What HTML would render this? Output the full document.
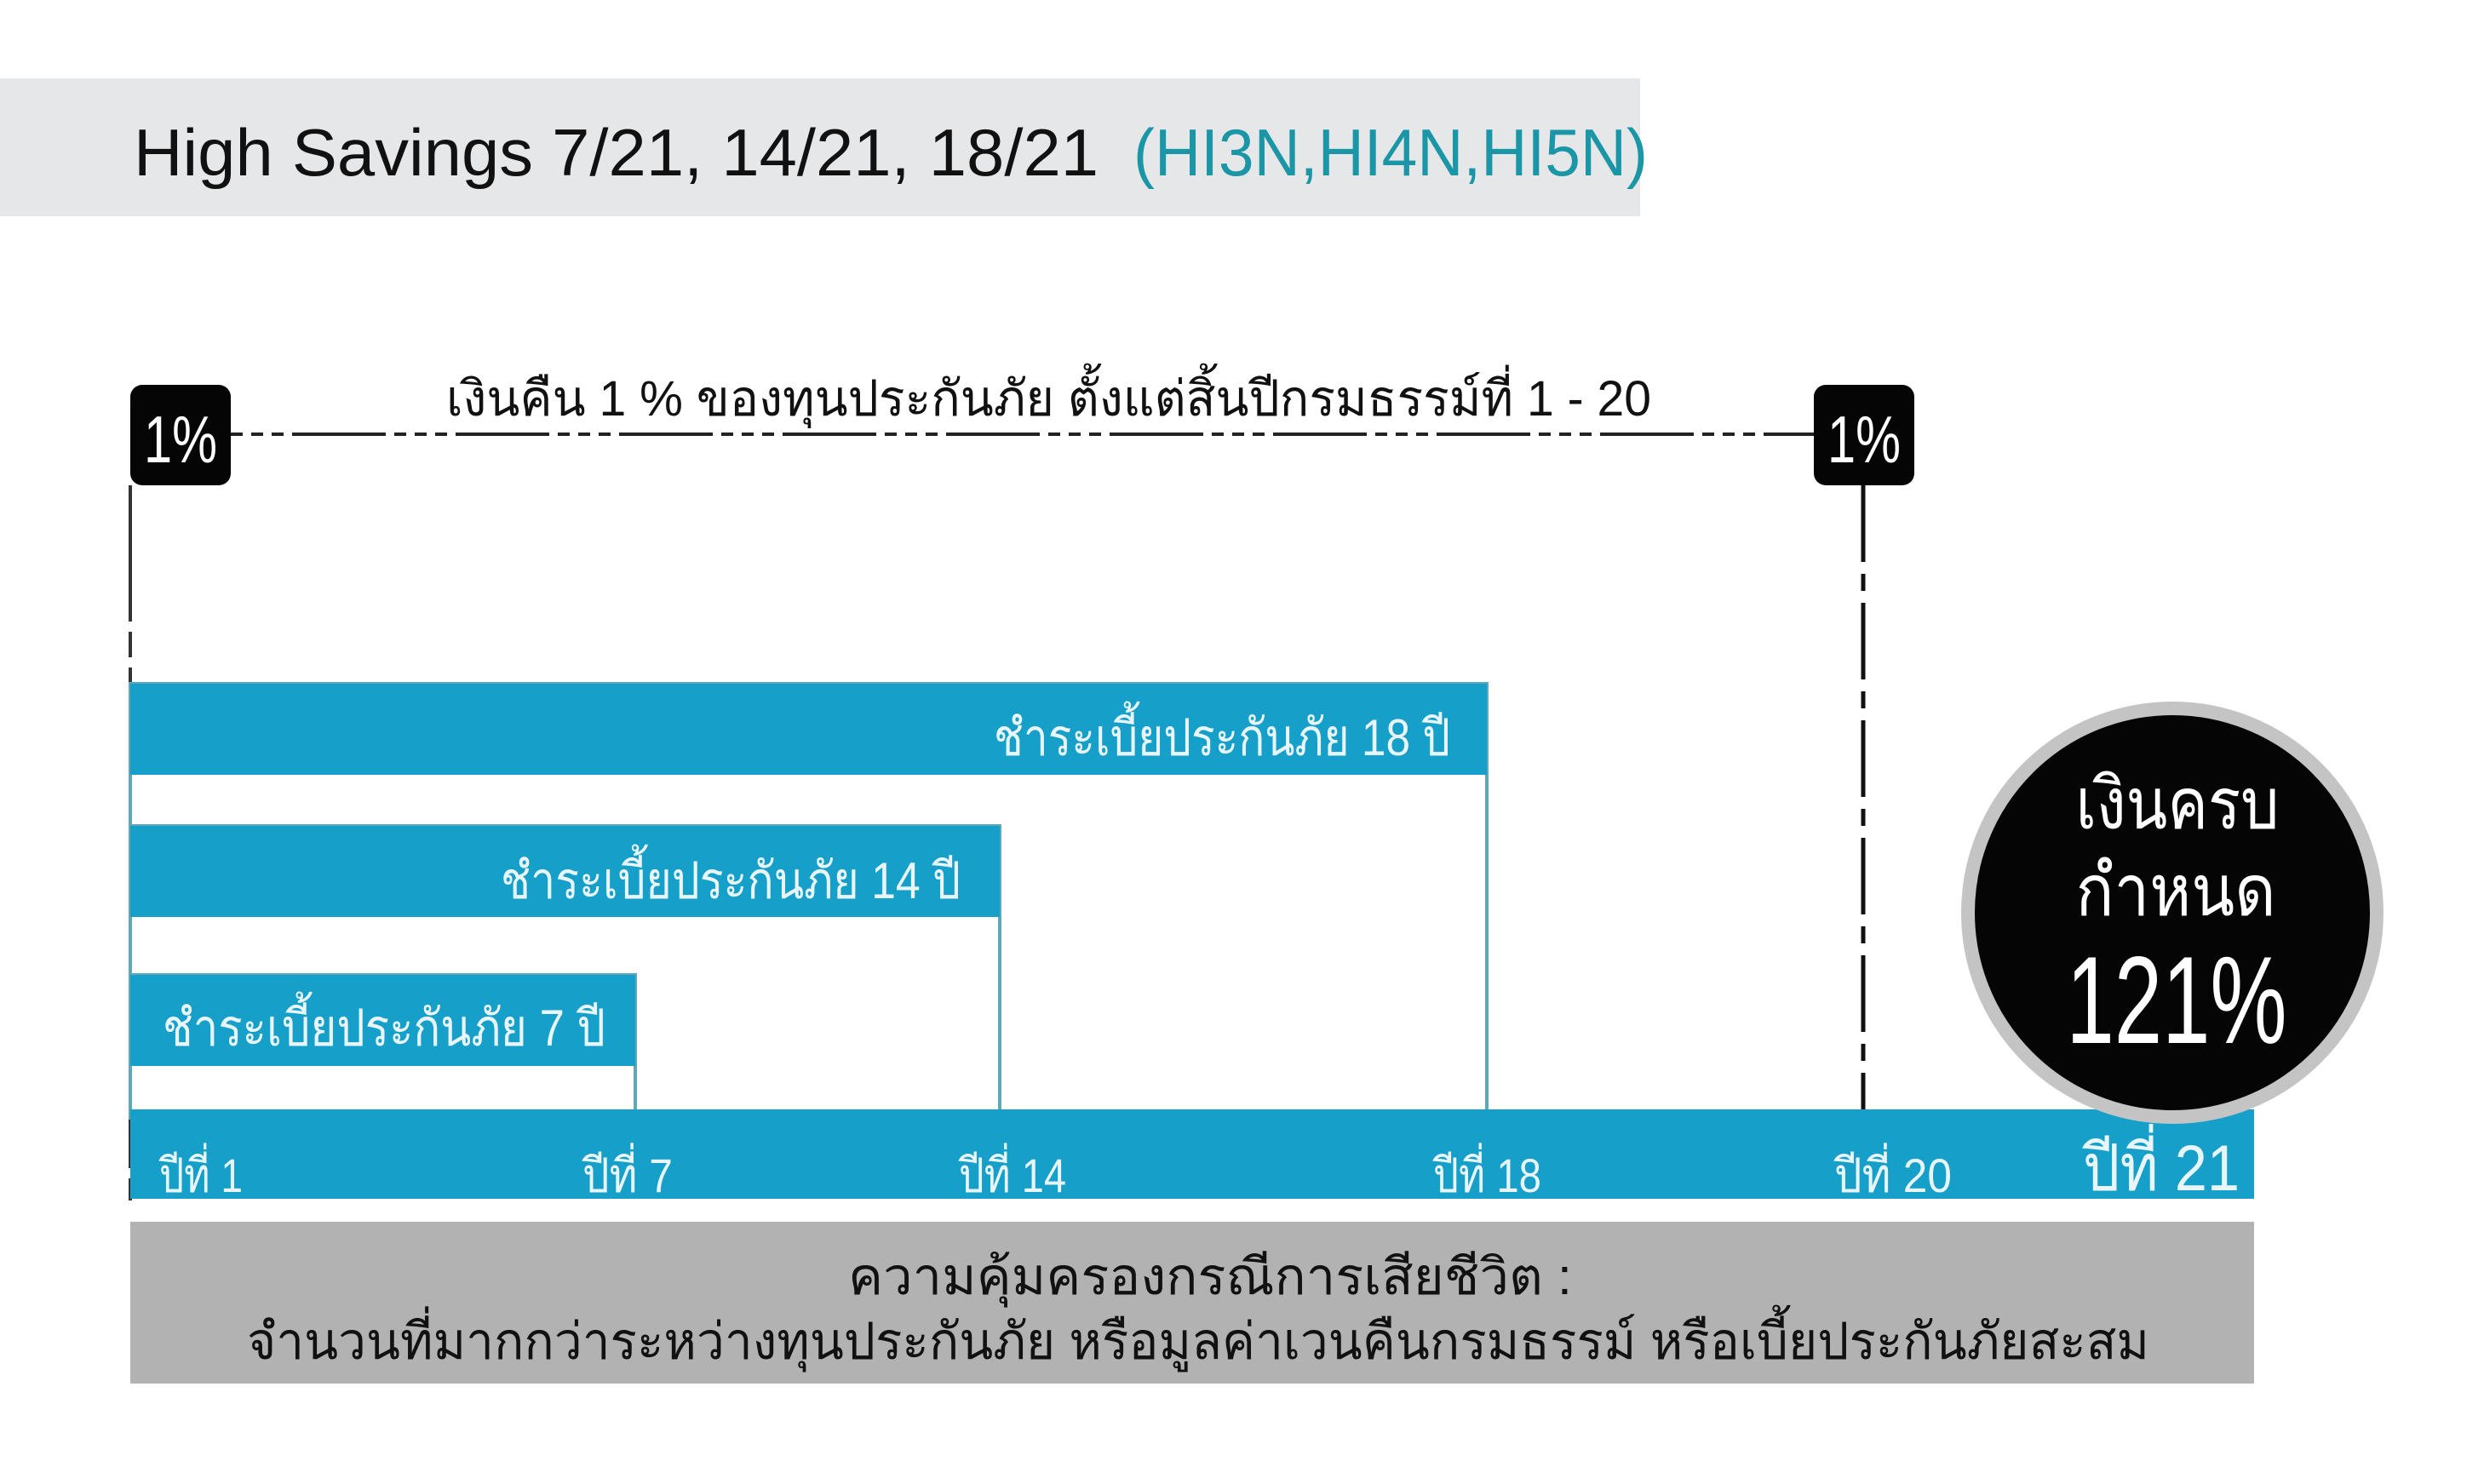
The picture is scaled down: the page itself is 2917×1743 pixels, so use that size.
<!DOCTYPE html>
<html><head><meta charset="utf-8"><style>
html,body{margin:0;padding:0;background:#fff;width:2917px;height:1743px;overflow:hidden}
svg{display:block}
text{font-family:"Liberation Sans","DejaVu Sans",sans-serif}
</style></head><body>
<svg width="2917" height="1743" viewBox="0 0 2917 1743" xmlns="http://www.w3.org/2000/svg">
<rect x="0" y="92" width="1926" height="162" fill="#e6e7e8"/>
<text x="157" y="206" font-size="78" fill="#111" textLength="1133" lengthAdjust="spacingAndGlyphs">High Savings 7/21, 14/21, 18/21</text>
<text x="1331" y="206" font-size="78" fill="#1a96a6" textLength="604" lengthAdjust="spacingAndGlyphs">(HI3N,HI4N,HI5N)</text>

<text x="524" y="488" font-size="58" fill="#111" textLength="1415" lengthAdjust="spacingAndGlyphs">เงินคืน 1 % ของทุนประกันภัย ตั้งแต่สิ้นปีกรมธรรม์ที่  1 - 20</text>
<line x1="271" y1="510" x2="2134" y2="510" stroke="#222" stroke-width="4" stroke-dasharray="14 10 14 10 14 10 110 10"/>
<line x1="153" y1="570" x2="153" y2="1410" stroke="#333" stroke-width="4" stroke-dasharray="160 12 30 12"/>
<line x1="2188" y1="570" x2="2188" y2="1305" stroke="#111" stroke-width="5" stroke-dasharray="90 14 20 14"/>

<rect x="153" y="452" width="118" height="118" rx="14" fill="#050505"/>
<text x="212" y="543" font-size="78" fill="#fff" text-anchor="middle" textLength="86" lengthAdjust="spacingAndGlyphs">1%</text>
<rect x="2130" y="452" width="118" height="118" rx="14" fill="#050505"/>
<text x="2189" y="543" font-size="78" fill="#fff" text-anchor="middle" textLength="86" lengthAdjust="spacingAndGlyphs">1%</text>

<!-- boxes -->
<rect x="153" y="803" width="1593" height="510" fill="#fff" stroke="#62a6ba" stroke-width="4"/>
<rect x="153" y="803" width="1593" height="107" fill="#159fc9"/>
<text x="1703" y="887" font-size="60" fill="#e8f6fb" text-anchor="end" textLength="536" lengthAdjust="spacingAndGlyphs">ชำระเบี้ยประกันภัย 18 ปี</text>

<rect x="153" y="970" width="1021" height="343" fill="#fff" stroke="#62a6ba" stroke-width="4"/>
<rect x="153" y="970" width="1021" height="107" fill="#159fc9"/>
<text x="1128" y="1055" font-size="60" fill="#e8f6fb" text-anchor="end" textLength="540" lengthAdjust="spacingAndGlyphs">ชำระเบี้ยประกันภัย 14 ปี</text>

<rect x="153" y="1145" width="593" height="168" fill="#fff" stroke="#62a6ba" stroke-width="4"/>
<rect x="153" y="1145" width="593" height="107" fill="#159fc9"/>
<text x="191" y="1228" font-size="60" fill="#e8f6fb" textLength="520" lengthAdjust="spacingAndGlyphs">ชำระเบี้ยประกันภัย 7 ปี</text>

<rect x="153" y="1303" width="2494" height="105" fill="#159fc9"/>
<text x="187" y="1400" font-size="56" fill="#e8f6fb" textLength="98" lengthAdjust="spacingAndGlyphs">ปีที่ 1</text>
<text x="684" y="1400" font-size="56" fill="#e8f6fb" textLength="106" lengthAdjust="spacingAndGlyphs">ปีที่ 7</text>
<text x="1126" y="1400" font-size="56" fill="#e8f6fb" textLength="126" lengthAdjust="spacingAndGlyphs">ปีที่ 14</text>
<text x="1683" y="1400" font-size="56" fill="#e8f6fb" textLength="127" lengthAdjust="spacingAndGlyphs">ปีที่ 18</text>
<text x="2154" y="1400" font-size="56" fill="#e8f6fb" textLength="138" lengthAdjust="spacingAndGlyphs">ปีที่ 20</text>
<text x="2446" y="1398" font-size="76" fill="#e8f6fb" textLength="184" lengthAdjust="spacingAndGlyphs">ปีที่ 21</text>

<rect x="153" y="1435" width="2494" height="190" fill="#b2b2b2"/>
<text x="1421" y="1520" font-size="60" fill="#111" text-anchor="middle" textLength="850" lengthAdjust="spacingAndGlyphs">ความคุ้มครองกรณีการเสียชีวิต  :</text>
<text x="1407" y="1596" font-size="60" fill="#111" text-anchor="middle" textLength="2234" lengthAdjust="spacingAndGlyphs">จำนวนที่มากกว่าระหว่างทุนประกันภัย หรือมูลค่าเวนคืนกรมธรรม์ หรือเบี้ยประกันภัยสะสม</text>

<circle cx="2551" cy="1072" r="240" fill="#050505" stroke="#c4c4c4" stroke-width="16"/>
<text x="2557" y="973" font-size="84" fill="#fff" text-anchor="middle" textLength="239" lengthAdjust="spacingAndGlyphs">เงินครบ</text>
<text x="2555" y="1075" font-size="84" fill="#fff" text-anchor="middle" textLength="235" lengthAdjust="spacingAndGlyphs">กำหนด</text>
<text x="2556" y="1225" font-size="146" fill="#fff" text-anchor="middle" textLength="259" lengthAdjust="spacingAndGlyphs">121%</text>
</svg>
</body></html>
